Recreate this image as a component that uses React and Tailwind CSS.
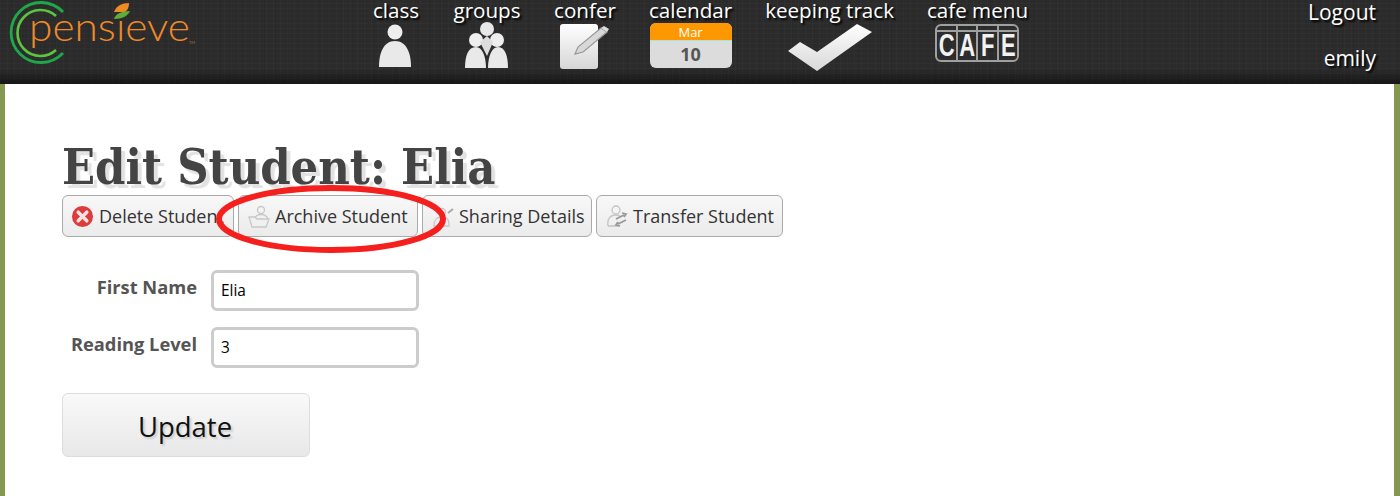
function Logo() {
    return (
        <svg viewBox="0 0 210 70" className="h-[70px] w-[210px]">
            <path d="M63 12 A30 30 0 1 0 63 53" fill="none" stroke="#1fa84a" strokeWidth="2.8" />
            <path d="M56 16 A23 23 0 1 0 56 50" fill="none" stroke="#5cc43f" strokeWidth="2.6" />
            <text x="29" y="41" fontFamily="Lato, sans-serif" fontWeight="300" fontSize="40" fill="#f0892a" textLength="161" lengthAdjust="spacingAndGlyphs">pensieve</text>
            <text x="189" y="44" fontFamily="Lato, sans-serif" fontSize="4" fill="#a8702e">TM</text>
            <path d="M114 12 C116 6 122 3 129 3 C129 7 128 10 125 12 Z" fill="#ef8a24" />
            <path d="M114 19 C115 14 122 11 130 11 C128 16 122 19 114 19 Z" fill="#5fae3a" />
        </svg>
    );
}

function PersonIcon() {
    return (
        <svg viewBox="0 0 48 48" className="h-[48px] w-[48px]">
            <circle cx="23" cy="10" r="7.5" fill="#eee" />
            <path d="M7 45 C7 30 12 19 23 19 C34 19 39 30 39 45 Z" fill="#e9e9e9" />
        </svg>
    );
}

function GroupIcon() {
    return (
        <svg viewBox="0 0 68 48" className="h-[48px] w-[68px]">
            <circle cx="34" cy="7" r="7" fill="#e8e8e8" />
            <circle cx="23" cy="18" r="7" fill="#eee" />
            <circle cx="44" cy="18" r="7" fill="#eee" />
            <path d="M27 20 L34 14 L40 20 L34 34 Z" fill="#ddd" />
            <path d="M12 46 C12 34 15 25 23 25 C29 25 33 34 33 46 Z" fill="#e9e9e9" />
            <path d="M35 46 C35 34 39 25 45 25 C52 25 55 34 55 46 Z" fill="#e9e9e9" />
        </svg>
    );
}

function ConferIcon() {
    return (
        <svg viewBox="0 0 62 48" className="h-[48px] w-[62px]">
            <defs>
                <linearGradient id="page" x1="0" y1="0" x2="0" y2="1">
                    <stop offset="0" stopColor="#fff" />
                    <stop offset="1" stopColor="#d6d6d6" />
                </linearGradient>
            </defs>
            <rect x="6" y="2" width="38" height="45" rx="3" fill="url(#page)" />
            <path d="M21 32 L24 25 L47 6 L53 10 L29 30 Z" fill="#d8d8d8" stroke="#999" strokeWidth="1.2" />
            <path d="M47 6 L50 4 L55 7 L53 10 Z" fill="#ddd" />
        </svg>
    );
}

function CalendarIcon() {
    return (
        <div className="mt-[1px] flex h-[45px] w-[82px] flex-col overflow-hidden rounded-[6px] bg-[#dcdcdc] text-center">
            <div className="h-[18px] border-b border-[#a8e4d8] bg-[#ff9800] text-[13px] leading-[18px] text-white">Mar</div>
            <div className="text-[18px] font-bold leading-[27px] text-[#555]">10</div>
        </div>
    );
}

function CheckIcon() {
    return (
        <svg viewBox="0 0 90 50" className="h-[50px] w-[90px]">
            <defs>
                <linearGradient id="tick" x1="0" y1="0" x2="0" y2="1">
                    <stop offset="0" stopColor="#fff" />
                    <stop offset="1" stopColor="#d8d8d8" />
                </linearGradient>
            </defs>
            <path d="M3 29 L15 20 L32 30 L72 2 L87 10 L32 49 Z" fill="url(#tick)" />
        </svg>
    );
}

function CafeIcon() {
    return (
        <div className="mt-[2px] flex h-[38px] w-[84px] flex-col overflow-hidden rounded-[6px] border-[2px] border-[#a0a0a0]">
            <div className="flex h-[6px] border-b-[2px] border-[#a0a0a0]">
                <span className="flex-1 border-r-[2px] border-[#a0a0a0]" />
                <span className="flex-1 border-r-[2px] border-[#a0a0a0]" />
                <span className="flex-1 border-r-[2px] border-[#a0a0a0]" />
                <span className="flex-1" />
            </div>
            <div className="flex flex-1 font-['Liberation_Sans',sans-serif] text-[22px] font-bold leading-[27px] text-[#f2f2f2]">
                <span className="flex-1 border-r-[2px] border-[#a0a0a0] text-center"><span className="inline-block scale-y-[1.4]">C</span></span>
                <span className="flex-1 border-r-[2px] border-[#a0a0a0] text-center"><span className="inline-block scale-y-[1.4]">A</span></span>
                <span className="flex-1 border-r-[2px] border-[#a0a0a0] text-center"><span className="inline-block scale-y-[1.4]">F</span></span>
                <span className="flex-1 text-center"><span className="inline-block scale-y-[1.4]">E</span></span>
            </div>
        </div>
    );
}

function NavItem({ label, children }) {
    return (
        <div className="flex flex-col items-center">
            <div className="h-[22px] whitespace-nowrap text-[20.6px] leading-[20px] text-white [text-shadow:2px_2px_2px_#000]">{label}</div>
            {children}
        </div>
    );
}

function DeleteIcon() {
    return (
        <svg viewBox="0 0 24 24" className="h-[23px] w-[23px] shrink-0">
            <circle cx="12" cy="12" r="11" fill="#dc3c3c" />
            <path d="M7.5 7.5 L16.5 16.5 M16.5 7.5 L7.5 16.5" stroke="#f6e4e4" strokeWidth="3.6" strokeLinecap="round" />
        </svg>
    );
}

function ArchiveIcon() {
    return (
        <svg viewBox="0 0 24 24" className="h-[24px] w-[24px] shrink-0" fill="none" stroke="#c8c8c8" strokeWidth="1.3">
            <circle cx="14" cy="6" r="3.5" />
            <path d="M8 15 C8 12 11 10.5 14 10.5 C18 10.5 20 12 21 15" />
            <path d="M2 13 L8 13 L10 15 L22 15 L19 23 L5 23 Z" fill="#f0f0f0" />
        </svg>
    );
}

function SharingIcon() {
    return (
        <svg viewBox="0 0 24 24" className="h-[24px] w-[24px] shrink-0" fill="none" stroke="#c8c8c8" strokeWidth="1.3">
            <circle cx="11" cy="8" r="3.5" />
            <path d="M3 22 C3 15 6 13 11 13 C16 13 18 15 18 22 Z" />
            <path d="M17 9 L22 5" stroke="#aaa" strokeWidth="2" />
        </svg>
    );
}

function TransferIcon() {
    return (
        <svg viewBox="0 0 24 24" className="h-[24px] w-[24px] shrink-0" fill="none" stroke="#c4c4c4" strokeWidth="1.3">
            <circle cx="11" cy="6" r="4" />
            <path d="M3 22 C2 15 5 11 11 11 C13 11 15 12 16 13 M3 22 L14 22" />
            <path d="M11 15 L19 11 M17 9 L21 10 L19 13" stroke="#999" strokeWidth="1.8" />
            <path d="M21 16 L13 20 M15 22 L11 21 L13 18" stroke="#999" strokeWidth="1.8" />
        </svg>
    );
}

function ToolButton({ width, icon, label, gap }) {
    return (
        <button className={`flex h-[42px] items-center rounded-[6px] border border-[#aaa] bg-linear-to-b from-[#f8f8f8] to-[#ebebeb] pl-[8px] text-[18px] text-[#333] ${width} ${gap}`}>
            {icon}
            <span className="whitespace-nowrap">{label}</span>
        </button>
    );
}

function Field({ label, value }) {
    return (
        <div className="flex items-center">
            <label className="w-[135px] pb-[7px] text-right text-[18.3px] font-bold text-[#555]">{label}</label>
            <input
                readOnly
                value={value}
                className="ml-[14px] h-[41px] w-[208px] rounded-[6px] border-[3px] border-[#ccc] bg-white pl-[7px] text-[15.4px] text-black"
            />
        </div>
    );
}

export default function App() {
    return (
        <div className="relative h-[496px] w-[1400px] overflow-hidden bg-[#84984f] font-['Open_Sans',sans-serif]">
            <header className="flex h-[84px] bg-[#2b2b2b] [background-image:linear-gradient(180deg,transparent_82%,rgba(0,0,0,.5)),repeating-linear-gradient(90deg,rgba(255,255,255,.018)_0_1px,transparent_1px_7px),repeating-linear-gradient(0deg,rgba(255,255,255,.018)_0_1px,transparent_1px_5px),repeating-linear-gradient(90deg,rgba(0,0,0,.05)_0_1px,transparent_1px_11px)]">
                <div className="w-[372px] shrink-0">
                    <Logo />
                </div>
                <nav className="flex gap-[33px]">
                    <NavItem label="class"><PersonIcon /></NavItem>
                    <NavItem label="groups"><GroupIcon /></NavItem>
                    <NavItem label="confer"><ConferIcon /></NavItem>
                    <NavItem label="calendar"><CalendarIcon /></NavItem>
                    <NavItem label="keeping track"><CheckIcon /></NavItem>
                    <NavItem label="cafe menu"><CafeIcon /></NavItem>
                </nav>
                <div className="ml-auto flex flex-col items-end gap-[18px] pr-[24px] text-[21px] leading-[28px] text-white [text-shadow:2px_2px_2px_#000]">
                    <span className="-mt-[2px]">Logout</span>
                    <span>emily</span>
                </div>
            </header>

            <main className="ml-[5px] mr-[6px] h-[412px] bg-white pl-[57px] pt-[55px]">
                <h1 className="font-['DejaVu_Serif_Condensed','DejaVu_Serif',serif] text-[48.3px] font-bold leading-[56px] text-[#444] [text-shadow:4px_4px_1px_#e2e2e2]">Edit Student: Elia</h1>
                <div className="flex gap-[4px]">
                    <ToolButton width="w-[172px]" gap="gap-[5px]" icon={<DeleteIcon />} label="Delete Student" />
                    <ToolButton width="w-[180px]" gap="gap-[4px]" icon={<ArchiveIcon />} label="Archive Student" />
                    <ToolButton width="w-[170px]" gap="gap-[4px]" icon={<SharingIcon />} label="Sharing Details" />
                    <ToolButton width="w-[187px]" gap="gap-[4px]" icon={<TransferIcon />} label="Transfer Student" />
                </div>
                <form className="mt-[33px] flex flex-col gap-[16px]">
                    <Field label="First Name" value="Elia" />
                    <Field label="Reading Level" value="3" />
                </form>
                <button className="mt-[25px] h-[64px] w-[248px] rounded-[6px] border border-[#ddd] bg-linear-to-b from-[#f9f9f9] to-[#e8e8e8] pr-[2px] pt-[4px] text-[27.5px] text-[#111] [text-shadow:2px_2px_2px_#ccc]">
                    Update
                </button>
            </main>

            {/* red marker scribbled over the screenshot */}
            <svg viewBox="0 0 234 72" className="absolute left-[214px] top-[183px] h-[72px] w-[234px]">
                <ellipse cx="117" cy="36" rx="112" ry="31" fill="none" stroke="#f5201d" strokeWidth="6" />
            </svg>
        </div>
    );
}
